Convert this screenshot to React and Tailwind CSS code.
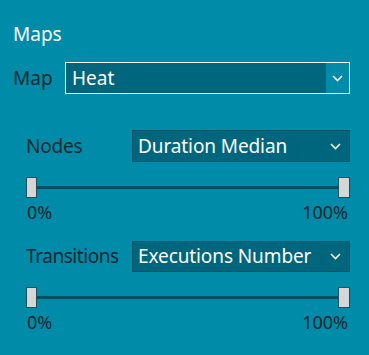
import React from "react";

const Chevron = () => (
  <svg width="11" height="7" viewBox="0 0 11 7" fill="none" className="block">
    <path d="M1 1 L5.5 5.5 L10 1" stroke="white" strokeWidth="1.6" />
  </svg>
);

const Slider = () => (
  <div>
    <div className="relative h-[21px] flex items-center">
      <div className="absolute left-[10px] right-[11px] h-[3px] bg-[#004f63]" />
      <div className="relative w-[11px] h-[21px] bg-[#d6d6d6] border border-[#1d4f5c]" />
      <div className="flex-1" />
      <div className="relative w-[12px] h-[21px] bg-[#d6d6d6] border border-[#1d4f5c]" />
    </div>
    <div className="flex justify-between text-[18px] leading-[20px] text-[#0b2730] mt-[4px] pl-[1px] pr-[2px]">
      <span>0%</span>
      <span>100%</span>
    </div>
  </div>
);

const Select = ({ value, h }) => (
  <div className={`flex-1 ${h} bg-[#00667d] border border-[#005468] flex items-center pl-[5px] pr-[8px]`}>
    <span className="flex-1 text-white text-[19px] leading-none tracking-[-0.1px]">{value}</span>
    <Chevron />
  </div>
);

export default function App() {
  return (
    <div
      className="w-[369px] h-[355px] bg-[#008ba8] pl-[13px] pr-[19px] pt-[22px]"
      style={{ fontFamily: '"Noto Sans", "Open Sans", sans-serif' }}
    >
      <div className="text-white text-[19px] leading-[24px]">Maps</div>
      <div className="flex items-center mt-[16px]">
        <span className="w-[52px] text-[19px] text-[#0b2730] leading-none">Map</span>
        <div className="flex-1 h-[32px] border border-white flex">
          <div className="flex-1 bg-[#00667d] flex items-center pl-[6px]">
            <span className="text-white text-[19px] leading-none">Heat</span>
          </div>
          <div className="w-[23px] flex items-center justify-center">
            <Chevron />
          </div>
        </div>
      </div>
      <div className="pl-[13px] mt-[36px]">
        <div className="flex items-center">
          <span className="w-[106px] text-[19px] text-[#0b2730] leading-none tracking-[-0.2px]">Nodes</span>
          <Select value="Duration Median" h="h-[32px]" />
        </div>
        <div className="mt-[15px]">
          <Slider />
        </div>
        <div className="flex items-center mt-[19px]">
          <span className="w-[106px] text-[19px] text-[#0b2730] leading-none tracking-[-0.45px]">Transitions</span>
          <Select value="Executions Number" h="h-[31px]" />
        </div>
        <div className="mt-[15px]">
          <Slider />
        </div>
      </div>
    </div>
  );
}
